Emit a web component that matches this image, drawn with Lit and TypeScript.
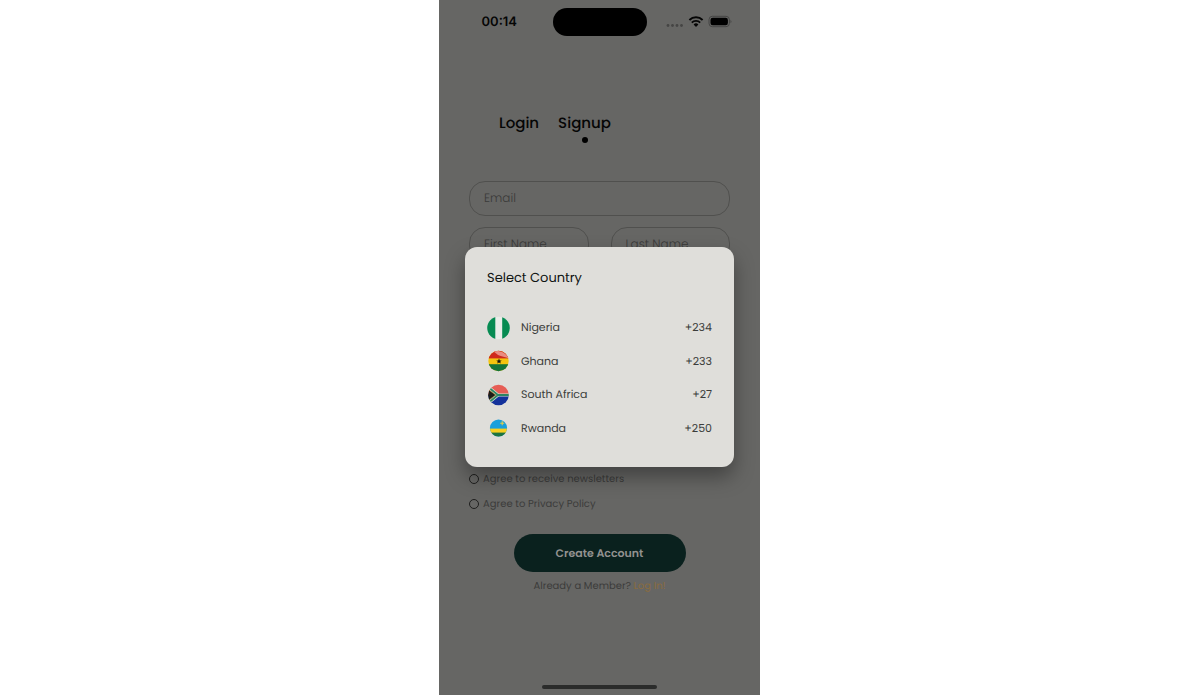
import { LitElement, html, css, svg } from "lit";
import { customElement, state } from "lit/decorators.js";

const flags = {
  ng: svg`<g clip-path="url(#c-ng)"><rect width="24" height="24" fill="#e9ece8"/><rect width="8.3" height="24" fill="#078b52"/><rect x="15.2" width="8.8" height="24" fill="#078b52"/></g>`,
  gh: svg`<g clip-path="url(#c-gh)"><rect width="24" height="24" fill="#f4c40f"/><rect width="24" height="9.4" fill="#cf2a1c"/><path d="M6 2C12 1 18 3 23 10C19 8 15 8 11 6Z" fill="#ea8c80"/><rect y="15.2" width="24" height="9" fill="#14743a"/><path d="M12 9.6l.8 1.8 1.9.1-1.5 1.2.6 1.9-1.8-1.1-1.8 1.1.6-1.9-1.5-1.2 1.9-.1z" fill="#16160c"/></g>`,
  za: svg`<g clip-path="url(#c-za)"><rect width="24" height="12" fill="#e65d55"/><rect y="12" width="24" height="12" fill="#14329b"/><path d="M0 3L11 12L0 21M10 12H24" fill="none" stroke="#d5dfcf" stroke-width="3.2"/><path d="M0 3L11 12L0 21M10 12H24" fill="none" stroke="#2d8463" stroke-width="1.8"/><path d="M0 5.6L8.8 12L0 18.4Z" fill="#1b1d18" stroke="#b99b45" stroke-width=".7"/></g>`,
  rw: svg`<g clip-path="url(#c-rw)"><rect width="24" height="24" fill="#19a0dc"/><rect y="12.6" width="24" height="5" fill="#f6cf22"/><rect y="16.6" width="24" height="6" fill="#1d7440"/><path d="M15.2 5.2v4M13.2 7.2h4" stroke="#e5cd4a" stroke-width="1.1"/></g>`,
};

const countries = [
  { id: "ng", name: "Nigeria", code: "+234", r: 11.3, flag: flags.ng },
  { id: "gh", name: "Ghana", code: "+233", r: 10.2, flag: flags.gh },
  { id: "za", name: "South Africa", code: "+27", r: 10.3, flag: flags.za },
  { id: "rw", name: "Rwanda", code: "+250", r: 8.6, flag: flags.rw },
];

@customElement("country-picker")
export class CountryPicker extends LitElement {
  @state() private selected = "";

  static styles = css`
    :host {
      display: block;
      background: #dfdeda;
      border-radius: 12px;
      padding: 20px 22px 22px;
      box-shadow: 0 10px 20px rgba(0, 0, 0, 0.35);
    }
    h2 {
      margin: 0 0 22px;
      font-size: 13px;
      line-height: 22px;
      font-weight: 400;
      color: #101413;
    }
    ul {
      list-style: none;
      margin: 0;
      padding: 0;
      height: 134px;
      display: grid;
      grid-auto-rows: 1fr;
    }
    li {
      display: grid;
    }
    button {
      display: flex;
      align-items: center;
      gap: 10px;
      padding: 0;
      border: 0;
      background: none;
      font: inherit;
      font-size: 11px;
      font-weight: 400;
      color: #3b3d3b;
      text-align: left;
      text-rendering: inherit;
      cursor: pointer;
    }
    svg {
      width: 24px;
      height: 24px;
      flex: none;
    }
    .name {
      flex: 1;
    }
  `;

  render() {
    return html`
      <h2>Select Country</h2>
      <ul>
        ${countries.map(
          (c) => html`<li>
            <button type="button" aria-pressed=${this.selected === c.id} @click=${() => (this.selected = c.id)}>
              <svg viewBox="0 0 24 24" aria-hidden="true">
                <defs><clipPath id="c-${c.id}"><circle cx="11.5" cy="12" r=${c.r} /></clipPath></defs>
                ${c.flag}
              </svg>
              <span class="name">${c.name}</span>
              <span>${c.code}</span>
            </button>
          </li>`
        )}
      </ul>
    `;
  }
}

@customElement("app-root")
export class AppRoot extends LitElement {
  static styles = css`
    :host {
      display: grid;
      justify-content: center;
      grid-template-columns: minmax(0, 321px);
      min-height: 100vh;
      box-sizing: border-box;
      padding-right: 1px;
      background: #fff;
      font-family: Poppins, Inter, sans-serif;
      text-rendering: geometricPrecision;
    }
    * {
      box-sizing: border-box;
    }
    button,
    input {
      text-rendering: inherit;
    }
    .phone {
      position: relative;
      display: flex;
      flex-direction: column;
      background: #666664;
      color: #050505;
    }
    .status {
      display: grid;
      grid-template-columns: 1fr 94px 1fr;
      align-items: center;
      padding-top: 8px;
    }
    .time {
      justify-self: center;
      padding-left: 7px;
      font: 600 13px/28px Inter, sans-serif;
    }
    .island {
      height: 28px;
      border-radius: 14px;
      background: #000;
    }
    .signals {
      width: 66px;
      height: 14px;
      justify-self: center;
      margin-right: 8px;
    }
    .tabs {
      display: flex;
      gap: 19px;
      padding: 77px 60px 0;
    }
    .tab {
      display: grid;
      justify-items: center;
      align-content: start;
      gap: 2px;
      padding: 0;
      border: 0;
      background: none;
      color: #050505;
      font: inherit;
      font-size: 15px;
      line-height: 22px;
      font-weight: 500;
    }
    .tab.active::after {
      content: "";
      width: 6px;
      height: 6px;
      border-radius: 50%;
      background: #000;
    }
    form {
      padding: 38px 30px 0;
    }
    .fields {
      display: grid;
      grid-template-columns: 1fr 1fr;
      align-content: start;
      gap: 11px 22px;
      min-height: 285px;
    }
    .field {
      width: 100%;
      min-width: 0;
      height: 35px;
      padding: 0 14px;
      border: 1px solid #50504e;
      border-radius: 16px;
      background: none;
      font: inherit;
      font-size: 12px;
      color: #222;
    }
    .field::placeholder {
      color: #3a3a39;
      font-weight: 300;
      opacity: 1;
    }
    .wide {
      grid-column: 1 / -1;
    }
    .agree {
      display: flex;
      align-items: center;
      gap: 4px;
      height: 25px;
      font-size: 10px;
      color: #3c3c3b;
    }
    .agree input {
      appearance: none;
      width: 10px;
      height: 10px;
      margin: 0;
      border: 1px solid #1f1f1e;
      border-radius: 50%;
    }
    .agree input:checked {
      background: #1f1f1e;
    }
    .submit {
      display: block;
      width: 172px;
      height: 38px;
      margin: 18px auto 0;
      border: 0;
      border-radius: 19px;
      background: #0a211e;
      color: #92918f;
      font: inherit;
      font-size: 11px;
      font-weight: 600;
    }
    .member {
      margin: 6px 0 0;
      font-size: 10px;
      line-height: 16px;
      text-align: center;
      color: #3c3c3b;
    }
    .member a {
      color: #8a6c3f;
      text-decoration: none;
    }
    .home {
      width: 115px;
      height: 4px;
      margin: auto auto 6px;
      border-radius: 2px;
      background: #2b2c2b;
    }
    .overlay {
      position: absolute;
      inset: 0;
      display: grid;
      align-content: center;
      padding: 19px 26px 0;
    }
  `;

  render() {
    return html`
      <main class="phone">
        <div class="status">
          <span class="time">00:14</span>
          <span class="island"></span>
          <svg class="signals" viewBox="0 0 66 14" aria-hidden="true">
            <g fill="#454544">
              <circle cx="2" cy="10.5" r="1.4" /><circle cx="6.5" cy="10.5" r="1.4" />
              <circle cx="11" cy="10.5" r="1.4" /><circle cx="15.5" cy="10.5" r="1.4" />
            </g>
            <g fill="none" stroke="#050505" stroke-width="1.9">
              <path d="M23.4 5a9.4 9.4 0 0 1 13.2 0" /><path d="M25.8 7.6a6 6 0 0 1 8.4 0" />
            </g>
            <path d="M27.6 9.5a3.4 3.4 0 0 1 4.8 0L30 11.9z" fill="#050505" />
            <rect x="43" y="1.3" width="20.4" height="10.4" rx="3.4" fill="none" stroke="#454544" />
            <rect x="44.5" y="2.8" width="17.4" height="7.4" rx="2.2" fill="#000" />
            <path d="M64.5 4.7q1.8 1.8 0 3.6z" fill="#454544" />
          </svg>
        </div>
        <nav class="tabs">
          <button class="tab" type="button">Login</button>
          <button class="tab active" type="button" aria-current="page">Signup</button>
        </nav>
        <form @submit=${(e: Event) => e.preventDefault()}>
          <div class="fields">
            <input class="field wide" type="email" placeholder="Email" aria-label="Email" />
            <input class="field" type="text" placeholder="First Name" aria-label="First Name" />
            <input class="field" type="text" placeholder="Last Name" aria-label="Last Name" />
          </div>
          <label class="agree"><input type="checkbox" />Agree to receive newsletters</label>
          <label class="agree"><input type="checkbox" />Agree to Privacy Policy</label>
          <button class="submit">Create Account</button>
          <p class="member">Already a Member? <a href="#login">Log In!</a></p>
        </form>
        <div class="home"></div>
        <div class="overlay">
          <country-picker role="dialog" aria-label="Select Country"></country-picker>
        </div>
      </main>
    `;
  }
}
